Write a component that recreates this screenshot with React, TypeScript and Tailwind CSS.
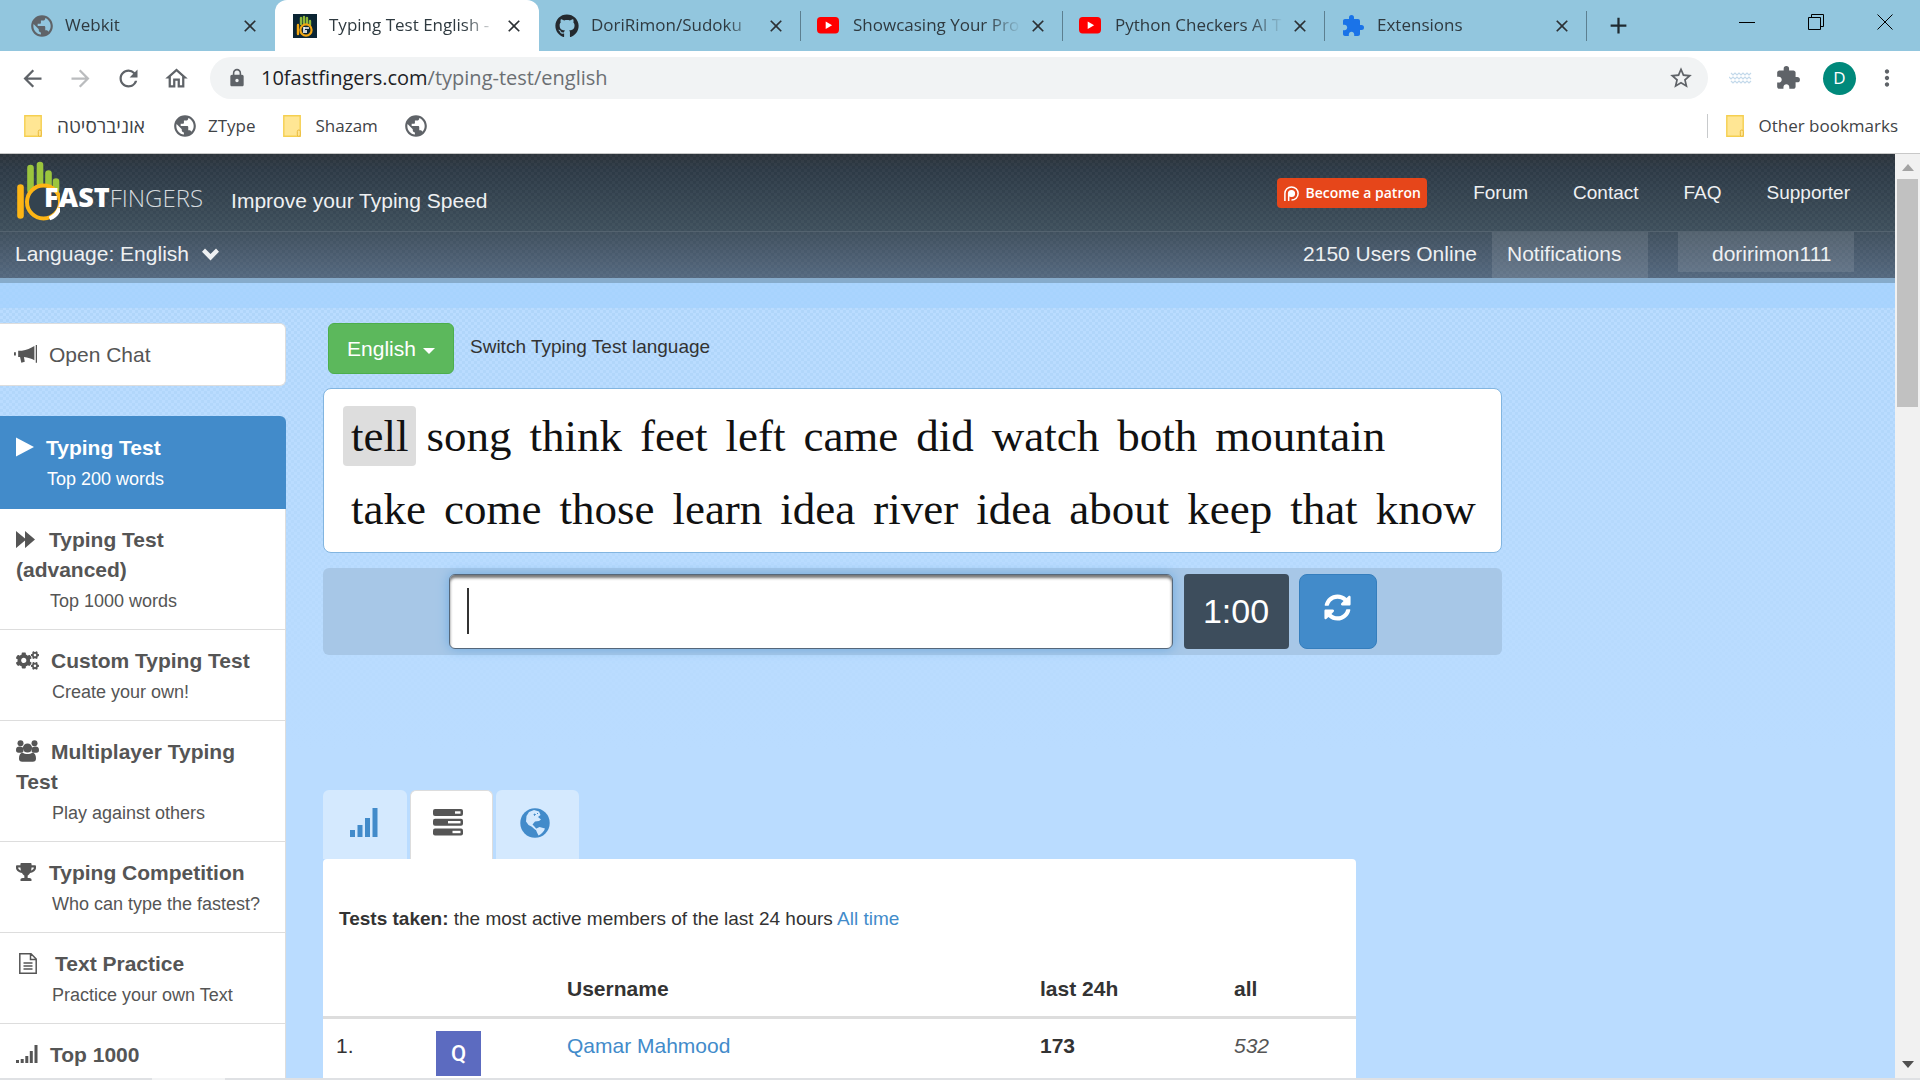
import type { ReactNode } from "react";
import {
  MdAdd,
  MdArrowBack,
  MdArrowForward,
  MdClose,
  MdExtension,
  MdLock,
  MdMoreVert,
  MdOutlineHome,
  MdPublic,
  MdRefresh,
  MdStarBorder,
} from "react-icons/md";
import { FaCogs, FaGithub, FaSyncAlt, FaTrophy } from "react-icons/fa";

/* ---------- Drawings ---------- */

function YouTubeIcon() {
  return (
    <svg viewBox="0 0 24 18" className="w-[22px] shrink-0" aria-hidden="true">
      <rect width="24" height="18" rx="4" fill="#f00" />
      <path d="M9.5 5v8l7-4z" fill="#fff" />
    </svg>
  );
}

function FingersFavicon() {
  return (
    <svg viewBox="0 0 24 24" className="size-6 shrink-0" aria-hidden="true">
      <rect width="24" height="24" fill="#0b2533" />
      <path d="M8 10V4M11 9V3M14 9V4M17 11V7" stroke="#8fb93a" strokeWidth="2.4" strokeLinecap="round" />
      <path d="M5 11v9" stroke="#f3a712" strokeWidth="2.4" strokeLinecap="round" />
      <circle cx="13" cy="16" r="5.6" fill="none" stroke="#f3a712" strokeWidth="2.2" />
      <path d="M11 13v6M11 14h5M13 16v3" stroke="#fff" strokeWidth="1.6" />
    </svg>
  );
}

function Folder() {
  return (
    <svg viewBox="0 0 18 22" className="h-[22px] w-[18px] shrink-0" aria-hidden="true">
      <path d="M.8.8h16.400v15.200v5.200H.8z" fill="#ffe694" stroke="#f5cf50" strokeWidth="1.400" />
      <rect x="14.300" y="15" width="3" height="6.300" rx="1.400" fill="#ffe694" stroke="#e9b93c" />
    </svg>
  );
}

function Waves() {
  return (
    <svg viewBox="0 0 24 12" className="w-6" fill="none" stroke="#c3d9ea" strokeWidth="1.200" aria-hidden="true">
      <path d="M2 1l2 2 2-2 2 2 2-2 2 2 2-2 2 2 2-2 2 2 2-2" />
      <path d="M0 5l2 2 2-2 2 2 2-2 2 2 2-2 2 2 2-2 2 2 2-2 2 2" />
      <path d="M2 9l2 2 2-2 2 2 2-2 2 2 2-2 2 2 2-2 2 2 2-2" />
    </svg>
  );
}

function LogoMark() {
  return (
    <svg viewBox="0 0 44 62" className="h-[62px] w-11 shrink-0" aria-hidden="true">
      <g stroke="#9bc53d" strokeWidth="6.600" strokeLinecap="round">
        <path d="M14.500 7v22M24 4v18M32.500 12.500v14M40 20.500v8" />
      </g>
      <path d="M4.500 26.500v28" stroke="#fdb515" strokeWidth="6.600" strokeLinecap="round" />
      <circle cx="27.500" cy="41" r="16.500" fill="#34434f" stroke="#fdb515" strokeWidth="4" />
      <path d="M43.500 47a17 17 0 0 1-10 10.500" fill="none" stroke="#fff" strokeWidth="4" />
    </svg>
  );
}

function Chevron() {
  return (
    <svg viewBox="0 0 17 13" className="w-[17px]" fill="currentColor" aria-hidden="true">
      <path d="M3 .5L8.500 6 14 .5l3 3.200L8.500 12.500 0 3.700z" />
    </svg>
  );
}

function Play() {
  return (
    <svg viewBox="0 0 18 20" className="h-5 w-[18px]" fill="currentColor" aria-hidden="true">
      <path d="M0 .5L18 10 0 19.500z" />
    </svg>
  );
}

function Bullhorn() {
  return (
    <svg viewBox="0 0 22 18" className="w-[23px]" fill="currentColor" aria-hidden="true">
      <path d="M20.800 0H22v17h-1.200z" />
      <path d="M19.500 1v13.500c-3-1.500-6-2.600-10-3l.8 4.500-3.300 1-1.200-5.500H4V5.500h3.500C12 5 16 3 19.500 1z" />
      <path d="M0 7h1.800v3H0z" />
    </svg>
  );
}

function Forward() {
  return (
    <svg viewBox="0 0 20 18" className="w-[19px]" fill="currentColor" aria-hidden="true">
      <path d="M0 0l9.500 8V0L20 9 9.500 18v-8L0 18z" />
    </svg>
  );
}

function Group() {
  return (
    <svg viewBox="0 0 23 22" className="w-[23px]" fill="currentColor" aria-hidden="true">
      <circle cx="4.500" cy="3.300" r="3" />
      <circle cx="18.500" cy="3.300" r="3" />
      <path d="M7 7.500C4 6 0 6 0 10c0 2 .800 2.700 2.500 2.700h3.200C7 12 7.500 11.600 7.500 11zM16 7.500c3-1.500 7-1.500 7 2.500 0 2-.800 2.700-2.500 2.700h-3.200c-1.300-.700-1.800-1.100-1.800-1.700z" />
      <circle cx="11.500" cy="8" r="4.600" />
      <path d="M6.500 12.500c1.500 1.200 3 1.500 5 1.500s3.500-.300 5-1.500c2.300.500 3.500 3 3.500 6 0 2.200-1.200 3.300-3.200 3.300H6.200C4.200 21.800 3 20.700 3 18.500c0-3 1.200-5.500 3.500-6z" />
    </svg>
  );
}

function FileText() {
  return (
    <svg viewBox="0 0 18 21" className="ml-[3px] w-[18px]" fill="none" stroke="currentColor" strokeWidth="1.500" aria-hidden="true">
      <path d="M.800.800H12l5.200 5.200v14.200H.800zM11.500 1v5.500H17M4.500 10h9M4.500 13h9M4.500 16h9" />
    </svg>
  );
}

function SignalFive() {
  return (
    <svg viewBox="0 0 22 18" className="w-[22px]" fill="currentColor" aria-hidden="true">
      <path d="M0 15h3v3H0zM4.700 14h3v4h-3zM9.300 11h3v7h-3zM13.800 6h3v12h-3zM18.500 0h3v18h-3z" />
    </svg>
  );
}

function SignalFour() {
  return (
    <svg viewBox="0 0 28 29" className="w-7" fill="currentColor" aria-hidden="true">
      <path d="M0 22h5v7H0zM7.500 17h5v12h-5zM15 10h5v19h-5zM22.500 0h5v29h-5z" />
    </svg>
  );
}

function TasksIcon() {
  return (
    <svg viewBox="0 0 30 27" className="w-[30px]" aria-hidden="true">
      <g fill="#555">
        <rect width="30" height="7" rx="2" />
        <rect y="9.700" width="30" height="7" rx="2" />
        <rect y="19.500" width="30" height="7" rx="2" />
      </g>
      <g fill="#fff">
        <rect x="22" y="2.300" width="5.500" height="2.400" />
        <rect x="15" y="12" width="12.500" height="2.400" />
        <rect x="19.500" y="21.800" width="8" height="2.400" />
      </g>
    </svg>
  );
}

function GlobeIcon() {
  return (
    <svg viewBox="0 0 30 30" className="w-[30px]" aria-hidden="true">
      <circle cx="15" cy="15" r="14.700" fill="#428bca" />
      <path
        d="M9 4l5-2 5 1.500 1.500 3.500-2.500 2 3 2.500-2 1.500-4 .5-2.500 3 1.500 1.500 2.500 3-1 1-4-3.500-3-1.500-2.500-3.500L6.500 8z"
        fill="#d4e9fe"
      />
      <path d="M15.500 21l4-2 5.500 1.500c-1 3-3.500 5.500-6.500 7l-1.500-3z" fill="#d4e9fe" />
      <path d="M14 6l1.500.500-1 1zM17 5l1 1" fill="#428bca" stroke="#428bca" />
    </svg>
  );
}

/* ---------- Browser frame ---------- */

type Tab = { title: string; icon: ReactNode; active?: boolean; divider?: boolean };

const tabs: Tab[] = [
  { title: "Webkit", icon: <MdPublic className="size-[26px] shrink-0 text-[#5f6368]" /> },
  { title: "Typing Test English -", icon: <FingersFavicon />, active: true },
  { title: "DoriRimon/Sudoku", icon: <FaGithub className="size-6 shrink-0 text-[#24292e]" />, divider: true },
  { title: "Showcasing Your Pro", icon: <YouTubeIcon />, divider: true },
  { title: "Python Checkers AI T", icon: <YouTubeIcon />, divider: true },
  { title: "Extensions", icon: <MdExtension className="size-6 shrink-0 text-[#1a73e8]" />, divider: true },
];

function BrowserTab({ tab }: { tab: Tab }) {
  return (
    <div
      className={
        tab.active
          ? "flex h-full w-[264px] shrink-0 items-center rounded-t-xl bg-white pl-[18px]"
          : "flex h-full w-[262px] shrink-0 items-center pl-4"
      }
    >
      <span className="flex w-[26px] shrink-0 items-center">{tab.icon}</span>
      <span className="ml-[10px] w-[168px] pb-0.5 whitespace-nowrap text-[17px] text-[#2f3a40] [mask-image:linear-gradient(to_right,black_80%,transparent)]">
        {tab.title}
      </span>
      <button aria-label="Close tab" className="ml-[7px] text-[#2b3034]">
        <MdClose className="size-[20px] stroke-[#2b3034]" />
      </button>
      {tab.divider && <span className="ml-auto h-[30px] w-px bg-[#5c7f90]" />}
    </div>
  );
}

function TabStrip() {
  return (
    <div className="flex h-[51px] shrink-0 items-center bg-[#92c6de] pl-[13px]">
      {tabs.map((t) => (
        <BrowserTab key={t.title} tab={t} />
      ))}
      <button aria-label="New tab" className="ml-[18px] text-[#1f2a30]">
        <MdAdd className="size-[27px]" />
      </button>
      <div className="ml-auto flex gap-[53px] pr-[27px] pb-2 text-black">
        <button aria-label="Minimize">
          <svg viewBox="0 0 16 16" className="size-4" stroke="currentColor">
            <path d="M0 8.500h16" />
          </svg>
        </button>
        <button aria-label="Restore">
          <svg viewBox="0 0 16 16" className="size-4" fill="none" stroke="currentColor">
            <path d="M.500 3.500h12v12H.500zM3.500 3.500V.500h12v12h-3" />
          </svg>
        </button>
        <button aria-label="Close window">
          <svg viewBox="0 0 16 16" className="size-4" stroke="currentColor">
            <path d="M.500.500l15 15M15.500.500l-15 15" />
          </svg>
        </button>
      </div>
    </div>
  );
}

function Toolbar() {
  return (
    <div className="flex h-[54px] shrink-0 items-center bg-white pr-5 pl-[19px] text-[#5f6368]">
      <div className="flex gap-[21px]">
        <button aria-label="Back">
          <MdArrowBack className="size-[27px]" />
        </button>
        <button aria-label="Forward" className="text-[#babcbe]">
          <MdArrowForward className="size-[27px]" />
        </button>
        <button aria-label="Reload">
          <MdRefresh className="size-[27px]" />
        </button>
        <button aria-label="Home">
          <MdOutlineHome className="size-[27px]" />
        </button>
      </div>
      <div className="ml-[20px] flex h-[42px] flex-1 items-center rounded-full bg-[#f1f3f4] pr-[14px] pl-[17px]">
        <MdLock className="size-5" />
        <span className="ml-[14px] flex-1 text-[20px] text-[#6b6f73]">
          <span className="text-[#202124]">10fastfingers.com</span>/typing-test/english
        </span>
        <button aria-label="Bookmark this page">
          <MdStarBorder className="size-[26px]" />
        </button>
      </div>
      <div className="ml-[21px] flex items-center gap-[22px]">
        <Waves />
        <MdExtension className="size-[26px]" />
        <button className="size-[33px] rounded-full bg-[#00897b] text-[17px] text-white">D</button>
        <button aria-label="Menu" className="-ml-1">
          <MdMoreVert className="size-[26px]" />
        </button>
      </div>
    </div>
  );
}

function BookmarksBar() {
  return (
    <div className="flex h-[49px] shrink-0 items-center border-b border-[#c8c8c8] bg-white pr-[22px] pb-[6px] pl-6 text-[17px] text-[#3f4347]">
      <a href="#uni" className="flex items-center gap-[15px]">
        <Folder />
        <span className="text-[19px] leading-6 whitespace-nowrap">אוניברסיטה</span>
      </a>
      <a href="#ztype" className="ml-[27px] flex items-center gap-[10px]">
        <MdPublic className="size-[26px] text-[#5f6368]" />
        ZType
      </a>
      <a href="#shazam" className="ml-[27px] flex items-center gap-[15px]">
        <Folder />
        Shazam
      </a>
      <a href="#site" aria-label="Bookmark" className="ml-[25px]">
        <MdPublic className="size-[26px] text-[#5f6368]" />
      </a>
      <a href="#other" className="ml-auto flex items-center gap-[14px]">
        <span className="mr-1 h-6 w-px bg-[#c8cacc]" />
        <Folder />
        Other bookmarks
      </a>
    </div>
  );
}

/* ---------- Site ---------- */

function SiteHeader() {
  return (
    <header className="shrink-0 text-[#eef0f2]">
      <div className="flex h-[78px] items-start border-b border-[#54636f] bg-[repeating-conic-gradient(#ffffff08_0_25%,transparent_0_50%),linear-gradient(#2c343b,#2d3a46_20%,#3e4f5c)] bg-[length:6px_6px,auto] pr-[45px] pl-4">
        <a href="#home" className="mt-[7px] flex items-start text-white">
          <LogoMark />
          <span className="-ml-4 mt-5 flex items-baseline whitespace-nowrap leading-8 [font-family:'Open_Sans',sans-serif]">
            <span className="text-[27px] font-extrabold">FAST</span>
            <span className="text-[24px] text-[#d5dade] font-light">FINGERS</span>
          </span>
        </a>
        <p className="mt-8 ml-[28px] whitespace-nowrap text-[21px] leading-[30px]">Improve your Typing Speed</p>
        <nav className="mt-6 ml-auto flex items-center whitespace-nowrap text-[19px] leading-7">
          <a
            href="#patron"
            className="mr-[46px] flex h-[30px] w-[150px] items-center justify-center gap-[5px] rounded bg-[#e6461a] text-[14px] font-semibold text-white [font-family:'Open_Sans',sans-serif]"
          >
            <svg viewBox="0 0 18 18" className="size-[17px]" fill="none" stroke="#fff" strokeWidth="1.600" aria-hidden="true">
              <path d="M2 17V9a7 7 0 1 1 7 7M6 17V9" />
              <circle cx="9" cy="9" r="3" fill="#fff" />
            </svg>
            Become a patron
          </a>
          <a href="#forum" className="mr-[45px]">Forum</a>
          <a href="#contact" className="mr-[45px]">Contact</a>
          <a href="#faq" className="mr-[45px]">FAQ</a>
          <a href="#supporter">Supporter</a>
        </nav>
      </div>
      <div className="flex h-[46px] items-start bg-[repeating-conic-gradient(#ffffff08_0_25%,transparent_0_50%),linear-gradient(#40505e,#54687f)] bg-[length:6px_6px,auto] pr-[41px] pl-[15px] text-[21px] leading-[44px] whitespace-nowrap">
        <button className="flex items-center gap-[13px]">
          Language: English
          <Chevron />
        </button>
        <span className="ml-auto">2150 Users Online</span>
        <a href="#notifications" className="ml-[15px] h-full w-[156px] bg-white/10 px-[15px]">
          Notifications
        </a>
        <a href="#profile" className="ml-[30px] h-10 w-44 bg-white/10 pl-[34px]">
          doririmon111
        </a>
      </div>
    </header>
  );
}

const menu = [
  { title: "Typing Test", sub: "Top 200 words", icon: <Play />, gap: "mr-[12px]", indent: "pl-[31px]", active: true },
  { title: "Typing Test (advanced)", sub: "Top 1000 words", icon: <Forward />, gap: "mr-[14px]", indent: "pl-[34px]" },
  { title: "Custom Typing Test", sub: "Create your own!", icon: <FaCogs className="size-[23px]" />, gap: "mr-[12px]", indent: "pl-[36px]" },
  { title: "Multiplayer Typing Test", sub: "Play against others", icon: <Group />, gap: "mr-[12px]", indent: "pl-[36px]" },
  { title: "Typing Competition", sub: "Who can type the fastest?", icon: <FaTrophy className="size-[20px]" />, gap: "mr-[13px]", indent: "pl-[36px]" },
  { title: "Text Practice", sub: "Practice your own Text", icon: <FileText />, gap: "mr-[18px]", indent: "pl-[36px]" },
  { title: "Top 1000", sub: "", icon: <SignalFive />, gap: "mr-[12px]", indent: "pl-[36px]" },
];

function Sidebar() {
  return (
    <aside className="w-[286px] shrink-0 pt-[15px] text-[#555]">
      <button className="flex h-[63px] w-full items-center gap-3 rounded-r-md border border-l-0 border-[#ddd] bg-white pl-[14px] text-[21px]">
        <Bullhorn />
        Open Chat
      </button>
      <nav className="mt-[30px] overflow-hidden rounded-tr-md">
        {menu.map((m) => (
          <a
            key={m.title}
            href="#menu"
            className={
              m.active
                ? "block bg-[#428bca] pt-[17px] pr-3 pb-[14px] pl-4 text-white"
                : "block border-r border-b border-[#ddd] bg-white pt-4 pr-3 pb-3 pl-4"
            }
          >
            <span className="block text-[21px] leading-[30px] font-bold">
              <span className={`inline-block align-middle ${m.gap} [&>svg]:block -mt-1`}>{m.icon}</span>
              {m.title}
            </span>
            <span className={`block min-h-8 text-[18px] leading-8 whitespace-nowrap ${m.indent}`}>{m.sub}</span>
          </a>
        ))}
      </nav>
    </aside>
  );
}

const lines = [
  ["tell", "song", "think", "feet", "left", "came", "did", "watch", "both", "mountain"],
  ["take", "come", "those", "learn", "idea", "river", "idea", "about", "keep", "that", "know"],
];

function TypingTest() {
  return (
    <section className="w-[1179px]">
      <div className="flex items-center gap-4 pl-[5px]">
        <button className="flex h-[51px] w-[126px] items-center justify-center gap-[7px] rounded-md border border-[#4cae4c] bg-[#5cb85c] text-[21px] text-white">
          English
          <svg viewBox="0 0 12 6" className="mt-1 w-3" fill="currentColor" aria-hidden="true">
            <path d="M0 0h12L6 6z" />
          </svg>
        </button>
        <span className="pb-0.5 text-[19px] text-[#333]">Switch Typing Test language</span>
      </div>
      <div className="mt-[14px] flex flex-col gap-[13px] rounded-lg border border-[#82b5e0] bg-white px-[19px] pt-[17px] pb-[13px] text-[45px] leading-[60px] text-[#111] [font-family:'Liberation_Serif',serif]">
        {lines.map((words, i) => (
          <div key={i} className="flex gap-[2px] whitespace-nowrap">
            {words.map((w, j) => (
              <span key={j} className={i === 0 && j === 0 ? "rounded bg-[#ddd] px-2" : "px-2"}>
                {w}
              </span>
            ))}
          </div>
        ))}
      </div>
      <div className="mt-[15px] flex h-[87px] items-center justify-center rounded-md bg-[#a7c7e7]">
        <div className="relative">
          <input
            type="text"
            aria-label="Type the words"
            className="block h-[75px] w-[724px] rounded-md border border-[#55677a] bg-white px-[18px] text-[36px] shadow-[inset_0_3px_3px_#777,0_0_12px_#6fabe0] outline-none"
          />
          <span className="absolute top-[14px] left-[18px] h-[46px] w-[2px] bg-[#333]" />
        </div>
        <span className="ml-[11px] flex h-[75px] w-[105px] items-center justify-center rounded bg-[#3d4d5c] text-[34px] text-white">
          1:00
        </span>
        <button
          aria-label="Restart"
          className="ml-[10px] flex h-[75px] w-[78px] items-center justify-center rounded-lg border border-[#357ebd] bg-[#428bca] pb-2 text-white"
        >
          <FaSyncAlt className="size-[27px]" />
        </button>
      </div>
    </section>
  );
}

function Ranking() {
  return (
    <section className="mt-[135px] w-[1033px]">
      <div className="flex items-stretch gap-[3px]" role="tablist">
        <button role="tab" aria-label="Statistics" className="flex h-[69px] w-[84px] items-center justify-center rounded-t-md bg-[#d4e9fe] pr-[3px] pb-[5px] text-[#428bca]">
          <SignalFour />
        </button>
        <button role="tab" aria-label="Activity" aria-selected="true" className="flex h-[69px] w-[83px] items-center justify-center rounded-t-md border border-b-0 border-[#ddd] bg-white pr-[7px] pb-[5px]">
          <TasksIcon />
        </button>
        <button role="tab" aria-label="World" className="flex h-[69px] w-[83px] items-center justify-center rounded-t-md bg-[#d4e9fe] pr-[6px] pb-1">
          <GlobeIcon />
        </button>
      </div>
      <div className="rounded-t bg-white pt-[46px] pb-10 text-[#333]">
        <p className="pl-4 text-[19px] leading-7">
          <b>Tests taken:</b> the most active members of the last 24 hours{" "}
          <a href="#all" className="text-[#428bca]">All time</a>
        </p>
        <table className="mt-[29px] w-full table-fixed text-left text-[21px] leading-[30px]">
          <thead>
            <tr className="border-b-[3px] border-[#ddd]">
              <th className="w-[100px]" />
              <th className="w-[131px]" />
              <th className="w-[473px] pt-[12px] pb-[12px] pl-[13px]">Username</th>
              <th className="w-[194px] pl-[13px]">last 24h</th>
              <th className="pl-[13px]">all</th>
            </tr>
          </thead>
          <tbody>
            <tr className="align-top">
              <td className="pt-3 pl-[13px]">1.</td>
              <td className="pt-3 pl-[13px]">
                <span className="flex size-[45px] items-center justify-center bg-[#5c6bc0] text-[22px] font-medium text-white [font-family:Roboto,sans-serif]">
                  Q
                </span>
              </td>
              <td className="pt-3 pl-[13px]">
                <a href="#user" className="text-[#428bca]">Qamar Mahmood</a>
              </td>
              <td className="pt-3 pl-[13px] font-bold">173</td>
              <td className="pt-3 pl-[13px] text-[#555] italic">532</td>
            </tr>
          </tbody>
        </table>
      </div>
    </section>
  );
}

function Scrollbar() {
  return (
    <div className="flex w-[25px] shrink-0 flex-col items-center bg-[#f1f1f1]" aria-hidden="true">
      <svg viewBox="0 0 12 7" className="mt-[10px] w-3" fill="#a3a3a3">
        <path d="M0 7h12L6 0z" />
      </svg>
      <div className="mt-2 h-[228px] w-[21px] bg-[#c1c1c1]" />
      <svg viewBox="0 0 12 7" className="mt-auto mb-[10px] w-3" fill="#505050">
        <path d="M0 0h12L6 7z" />
      </svg>
    </div>
  );
}

export default function App() {
  return (
    <div className="flex h-screen flex-col overflow-hidden bg-white [font-family:'Open_Sans','Noto_Sans','DejaVu_Sans',sans-serif]">
      <TabStrip />
      <Toolbar />
      <BookmarksBar />
      <div className="flex min-h-0 flex-1 [font-family:'Liberation_Sans',Arial,sans-serif]">
        <div className="flex min-w-0 flex-1 flex-col overflow-hidden bg-[linear-gradient(to_bottom,transparent,#badcff_600px),repeating-conic-gradient(#acd3f8_0_25%,#badcff_0_50%)] bg-[length:auto,6px_6px]">
          <SiteHeader />
          <div className="h-[30px] shrink-0 border-t-[5px] border-[#86abcb] bg-[#a4d2fd]/75" />
          <main className="flex min-h-0 flex-1 gap-[37px]">
            <Sidebar />
            <div className="min-w-0 flex-1 pt-[15px]">
              <TypingTest />
              <Ranking />
            </div>
          </main>
        </div>
        <Scrollbar />
      </div>
      <div className="flex h-[2px] shrink-0 bg-[#dfe1e4] pl-[152px]">
        <div className="w-[73px] bg-[#f3f4f5]" />
      </div>
    </div>
  );
}
